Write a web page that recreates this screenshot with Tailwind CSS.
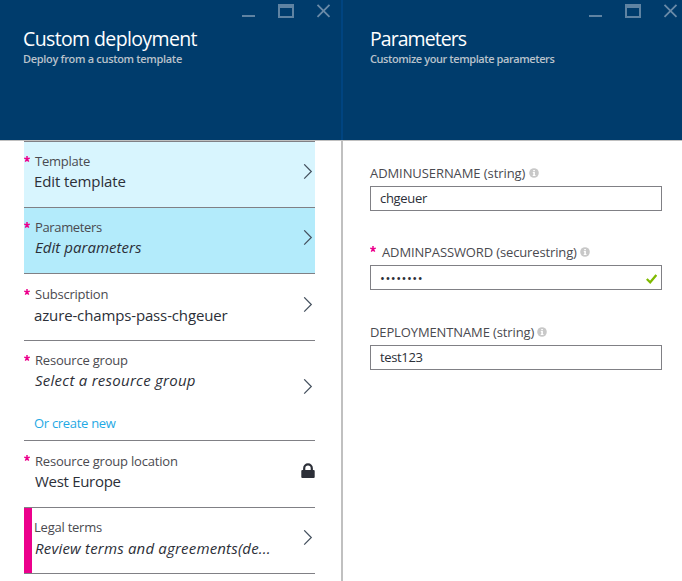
<!DOCTYPE html>
<html lang="en">
<head>
<meta charset="utf-8">
<title>Custom deployment</title>
<script src="https://cdn.jsdelivr.net/npm/@tailwindcss/browser@4"></script>
</head>
<body class="bg-white">
<svg class="hidden">
  <symbol id="chev" viewBox="0 0 10 16"><path d="M1.200 .3 8.300 7.500 1.200 14.700" fill="none" stroke="#44505e" stroke-width="1.200"/></symbol>
  <symbol id="star" viewBox="0 0 6 6"><path d="M3 3V0M3 3 .2 2.100M3 3l2.800-.9M3 3 1.300 5.600M3 3l1.700 2.600" fill="none" stroke="#ec008c" stroke-width="1.500"/></symbol>
  <symbol id="info" viewBox="0 0 10 10"><circle cx="5" cy="5" r="4.800" fill="#c8c8c8"/><path d="M4.200 2h1.700v1.300H4.200zM3.800 4.100h2.100v3h.6v.9H3.700v-.9h.6V5h-.5z" fill="#fff"/></symbol>
  <symbol id="win" viewBox="0 0 90 16"><path d="M1 12h13v2H1z" fill="#5f83a2"/><path d="M37 1h16v14H37zM39 5v8h12V5z" fill="#5f83a2" fill-rule="evenodd"/><path d="M76.500 1.800 88.500 13.800M88.500 1.800 76.500 13.800" stroke="#6a8ba8" stroke-width="1.800"/></symbol>
</svg>
<div class="flex h-[581px] w-[682px] overflow-hidden bg-white font-['Open_Sans','Noto_Sans',sans-serif] whitespace-nowrap text-[#4a4a50]">
  <section class="flex w-[341px] flex-col">
    <header class="relative h-[141px] border-b border-[#c0c0c0] bg-[#003c6c] pt-[25px] pl-[23px]">
      <svg class="absolute top-[3px] left-[241px] h-4 w-[90px]"><use href="#win"/></svg>
      <h1 class="h-[26px] text-[19.5px] leading-[28px] tracking-[-0.62px] text-white">Custom deployment</h1>
      <p class="text-[11px] leading-4 font-semibold tracking-[-0.32px] text-[#b9c2cb]">Deploy from a custom template</p>
    </header>
    <div class="ml-6 w-[291px] border-t border-[#808085] text-[13px]">
      <div class="flex h-[66px] items-start border-b border-[#808085] bg-[#d8f5fe]">
        <svg class="mt-[14px] h-[6px] w-[6px]"><use href="#star"/></svg>
        <div class="ml-[5px] grow pt-[10px]"><div class="h-[19px] leading-[18px] tracking-[-0.23px]">Template</div><div class="-ml-px text-[15px] leading-5 tracking-[-0.11px] text-[#2c2f38]">Edit template</div></div>
        <svg class="mt-[22px] mr-[2px] h-4 w-[10px]"><use href="#chev"/></svg>
      </div>
      <div class="flex h-[66px] items-start border-b border-[#808085] bg-[#b3ebfb]">
        <svg class="mt-[14px] h-[6px] w-[6px]"><use href="#star"/></svg>
        <div class="ml-[5px] grow pt-[10px]"><div class="h-[19px] leading-[18px] tracking-[-0.35px]">Parameters</div><div class="text-[15px] leading-5 tracking-[0.04px] text-[#2c2f38] italic">Edit parameters</div></div>
        <svg class="mt-[22px] mr-[2px] h-4 w-[10px]"><use href="#chev"/></svg>
      </div>
      <div class="flex h-[67px] items-start border-b border-[#808085]">
        <svg class="mt-[15px] h-[6px] w-[6px]"><use href="#star"/></svg>
        <div class="ml-[5px] grow pt-[11px]"><div class="h-5 leading-[18px] tracking-[-0.21px]">Subscription</div><div class="-ml-px text-[15px] leading-5 tracking-[-0.14px] text-[#2c2f38]">azure-champs-pass-chgeuer</div></div>
        <svg class="mt-[23px] mr-[2px] h-4 w-[10px]"><use href="#chev"/></svg>
      </div>
      <div class="flex h-[100px] items-start border-b border-[#808085]">
        <svg class="mt-[14px] h-[6px] w-[6px]"><use href="#star"/></svg>
        <div class="ml-[5px] grow pt-[10px]"><div class="h-[19px] leading-[18px] tracking-[-0.2px]">Resource group</div><div class="h-[44px] text-[15px] leading-5 tracking-[0.26px] text-[#2c2f38] italic">Select a resource group</div><div class="-ml-px leading-[18px] tracking-[-0.3px] text-[#1fa9e4]">Or create new</div></div>
        <svg class="mt-[38px] mr-[2px] h-4 w-[10px]"><use href="#chev"/></svg>
      </div>
      <div class="flex h-[67px] items-start border-b border-[#808085]">
        <svg class="mt-[14px] h-[6px] w-[6px]"><use href="#star"/></svg>
        <div class="ml-[5px] grow pt-[11px]"><div class="h-[19px] leading-[18px] tracking-[-0.2px]">Resource group location</div><div class="text-[15px] leading-5 tracking-[-0.3px] text-[#2c2f38]">West Europe</div></div>
        <svg class="mt-[22px] h-[15px] w-[14px]" viewBox="0 0 14 15"><path d="M3.200 8V5.200a3.800 3.800 0 0 1 7.600 0V8" fill="none" stroke="#2c2f38" stroke-width="2.200"/><rect x=".3" y="7" width="13.400" height="8" rx="1" fill="#2c2f38"/></svg>
      </div>
      <div class="flex h-[66px] items-start border-b border-[#808085]">
        <div class="h-[65px] w-2 bg-[#ec008c]"></div>
        <div class="ml-[2px] grow pt-[10px]"><div class="h-5 leading-[18px] tracking-[-0.23px]">Legal terms</div><div class="pl-px text-[15px] leading-5 tracking-[0.18px] text-[#2c2f38] italic">Review terms and agreements(de...</div></div>
        <svg class="mt-[22px] mr-[2px] h-4 w-[10px]"><use href="#chev"/></svg>
      </div>
    </div>
  </section>
  <div class="w-[2px] bg-[#c0c0c0]"><div class="h-[140px] bg-[#004480]"></div></div>
  <section class="w-[339px]">
    <header class="relative h-[141px] border-b border-[#c0c0c0] bg-[#003c6c] pt-[25px] pl-[27px]">
      <svg class="absolute top-[3px] left-[245px] h-4 w-[90px]"><use href="#win"/></svg>
      <h1 class="h-[26px] text-[19.5px] leading-[28px] tracking-[-0.95px] text-white">Parameters</h1>
      <p class="text-[11px] leading-4 font-semibold tracking-[-0.42px] text-[#b9c2cb]">Customize your template parameters</p>
    </header>
    <div class="ml-[27px] w-[292px] pt-[23px] text-[13px]">
      <div class="flex h-[22px] items-start leading-[18px] tracking-[-0.08px]"><span>ADMINUSERNAME (string)</span><svg class="mt-1 ml-1 h-[10px] w-[10px]"><use href="#info"/></svg></div>
      <div class="h-[25px] border border-[#808085] pl-[9px] leading-[23px] tracking-[-0.3px] text-[#2c2f38]">chgeuer</div>
      <div class="mt-[32px] flex h-[22px] items-start leading-[18px] tracking-[-0.13px]"><svg class="mt-[3px] mr-[6px] h-[6px] w-[6px]"><use href="#star"/></svg><span>ADMINPASSWORD (securestring)</span><svg class="mt-1 ml-[3px] h-[10px] w-[10px]"><use href="#info"/></svg></div>
      <div class="flex h-[25px] justify-between border border-[#808085] pl-[9px] leading-[23px] text-[#2c2f38]"><span class="pt-px tracking-[0.5px]">••••••••</span><svg class="mt-[8px] mr-[4px] h-[10px] w-[11px]" viewBox="0 0 11 10"><path d="M.8 5 4.200 8.300 10.300 1" fill="none" stroke="#7fba00" stroke-width="2.200"/></svg></div>
      <div class="mt-[33px] flex h-[22px] items-start leading-[18px] tracking-[-0.12px]"><span>DEPLOYMENTNAME (string)</span><svg class="mt-1 ml-[3px] h-[10px] w-[10px]"><use href="#info"/></svg></div>
      <div class="h-[25px] border border-[#808085] pl-[9px] leading-[23px] tracking-[-0.35px] text-[#2c2f38]">test123</div>
    </div>
  </section>
</div>
</body>
</html>
